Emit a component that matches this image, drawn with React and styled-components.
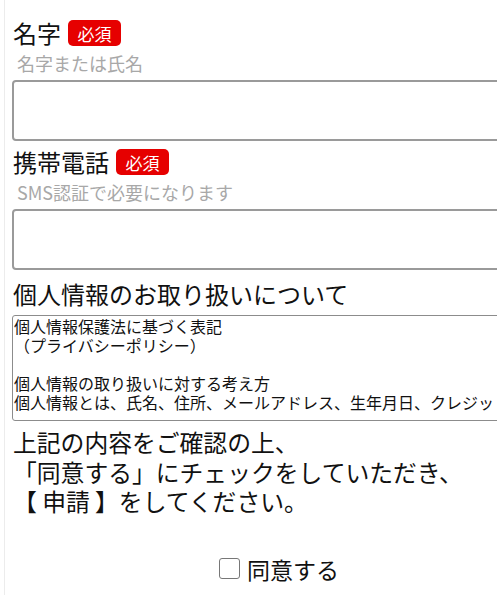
import React from 'react';
import styled, { createGlobalStyle } from 'styled-components';

const GlobalStyle = createGlobalStyle`
  html, body {
    margin: 0;
    padding: 0;
    background: #fff;
    overflow: hidden;
  }
  body {
    font-family: "Noto Sans CJK JP", "Noto Sans", sans-serif;
    color: #111;
  }
`;

const Page = styled.div`
  margin-left: 4px;
  width: 550px;
  min-height: 595px;
  box-sizing: border-box;
  border-left: 1px solid #ececec;
  padding: 17px 8px 0 7px;
  display: flex;
  flex-direction: column;
`;

const Field = styled.div`
  display: flex;
  flex-direction: column;
  margin-bottom: ${(p) => p.gap || 0}px;
`;

const LabelRow = styled.div`
  display: flex;
  align-items: center;
  gap: 7px;
  font-size: 24px;
  line-height: 32px;
  padding-left: 1px;
`;

const Required = styled.span`
  display: inline-flex;
  align-items: center;
  justify-content: center;
  width: 53px;
  height: 26px;
  border-radius: 5px;
  background: #e60000;
  color: #fff;
  font-size: 17px;
  line-height: 1;
`;

const Hint = styled.div`
  font-size: 18px;
  line-height: 24px;
  color: #a8a8a8;
  padding-left: 5px;
  margin: 2px 0 5px;
`;

const TextBox = styled.input`
  display: block;
  box-sizing: border-box;
  width: 100%;
  height: 61px;
  border: 2px solid #9a9a9a;
  border-radius: 4px;
  background: #fff;
  font: inherit;
  margin: 0;
`;

const Title = styled.div`
  font-size: 24px;
  line-height: 32px;
  padding-left: 1px;
  margin-bottom: 5px;
`;

const Policy = styled.textarea`
  display: block;
  box-sizing: border-box;
  width: 100%;
  height: 106px;
  border: 1.5px solid #8c8c8c;
  border-radius: 3px;
  padding: 1px 1px;
  margin: 0;
  font-family: "Noto Sans CJK JP", sans-serif;
  font-size: 16px;
  line-height: 19px;
  color: #111;
  resize: none;
  overflow: hidden;
  white-space: pre;
`;

const Notice = styled.p`
  margin: 6px 0 0;
  font-size: 23.8px;
  line-height: 29.5px;
  padding-left: 1px;
`;

const Agree = styled.label`
  display: flex;
  align-items: center;
  justify-content: center;
  gap: 7px;
  margin-top: 38px;
  font-size: 23px;
  line-height: 30px;
`;

const Check = styled.span`
  width: 19px;
  height: 19px;
  border: 1.5px solid #777;
  border-radius: 3px;
  background: #fff;
`;

const policyText =
  '個人情報保護法に基づく表記\n（プライバシーポリシー）\n\n個人情報の取り扱いに対する考え方\n個人情報とは、氏名、住所、メールアドレス、生年月日、クレジットカード番号等、特定の個人を識別できる情報をいいます。';

const App = () => (
  <>
    <GlobalStyle />
    <Page>
      <Field gap={5}>
        <LabelRow>
          名字<Required>必須</Required>
        </LabelRow>
        <Hint>名字または氏名</Hint>
        <TextBox type="text" />
      </Field>
      <Field gap={8}>
        <LabelRow>
          携帯電話<Required>必須</Required>
        </LabelRow>
        <Hint>SMS認証で必要になります</Hint>
        <TextBox type="tel" />
      </Field>
      <Field>
        <Title>個人情報のお取り扱いについて</Title>
        <Policy readOnly value={policyText} />
      </Field>
      <Notice>
        上記の内容をご確認の上、
        <br />
        「同意する」にチェックをしていただき、
        <br />
        【 申請 】をしてください。
      </Notice>
      <Agree>
        <Check />
        同意する
      </Agree>
    </Page>
  </>
);

export default App;
